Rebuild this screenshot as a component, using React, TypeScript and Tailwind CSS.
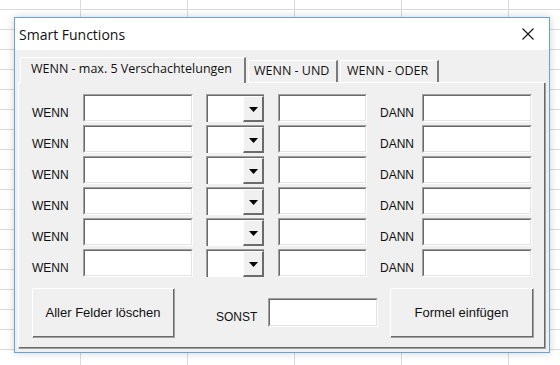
import { ReactNode } from 'react'

const rows = [0, 1, 2, 3, 4, 5]

const uiFont = "font-['Open_Sans',sans-serif]"
const ctlFont = "font-['Liberation_Sans',Arial,sans-serif]"

function TextBox({ className = '' }: { className?: string }) {
  return (
    <div className={`border-t border-l border-[#a0a0a0] border-r border-b border-r-white border-b-white ${className}`}>
      <div className="h-full bg-white border-t border-l border-[#696969] border-r border-b border-r-[#e3e3e3] border-b-[#e3e3e3]" />
    </div>
  )
}

function ComboBox() {
  return (
    <div className="flex h-[28px] w-[58px] bg-white border-t border-l border-[#a0a0a0]">
      <div className="flex flex-1 border-t border-l border-[#696969]">
        <div className="flex-1" />
        <div className="flex w-[21px] items-center justify-center border-t border-l border-white border-r-2 border-b-2 border-r-[#6b6b6b] border-b-[#6b6b6b] bg-[#f0f0f0]">
          <svg width="9" height="5" viewBox="0 0 9 5" className="mt-[1px]">
            <path d="M0 0h9L4.5 5z" fill="#000" />
          </svg>
        </div>
      </div>
    </div>
  )
}

function RaisedButton({ children, width }: { children: ReactNode; width: string }) {
  return (
    <div className={`${width} h-[50px] border-t border-l border-white border-r border-b border-r-[#a0a0a0] border-b-[#a0a0a0]`}>
      <div className={`flex h-full items-center justify-center border-r border-b border-[#696969] text-[13px] text-[#111] ${ctlFont}`}>
        {children}
      </div>
    </div>
  )
}

function Label({ text, width }: { text: string; width: string }) {
  return <div className={`${width} pt-[12px] text-[12px] leading-[14px] text-[#111] ${ctlFont}`}>{text}</div>
}

export default function App() {
  return (
    <div className="relative h-[365px] w-[560px] overflow-hidden bg-white bg-[linear-gradient(to_right,#dadada_1px,transparent_1px),linear-gradient(to_bottom,#dadada_1px,transparent_1px)] bg-size-[107px_20px] bg-position-[80px_9px]">
      <div className="absolute left-[14px] top-[17px] flex h-[336px] w-[536px] flex-col border border-[#64a3dc] bg-[#f0f0f0] shadow-[0_0_8px_rgba(0,0,0,0.18)]">
        {/* title bar */}
        <div className="flex h-[32px] items-center justify-between bg-white pl-[4px] pr-[15px]">
          <span className={`text-[14px] text-[#111] ${uiFont}`}>Smart Functions</span>
          <svg width="12" height="12" viewBox="0 0 12 12">
            <path d="M0.5 0.5l11 11M11.5 0.5l-11 11" stroke="#111" strokeWidth="1.1" />
          </svg>
        </div>

        <div className="flex flex-1 flex-col pt-[7px] pl-[3px] pr-[3px] pb-[3px]">
          {/* tabs */}
          <div className={`flex h-[25px] items-start pl-[2px] text-[12.5px] text-[#111] ${uiFont}`}>
            <div className="relative z-10 flex h-[26px] w-[226px] items-start border-t border-l border-white border-r-2 border-r-[#7a7a7a] bg-[#f0f0f0] pl-[10px] pt-[2px]">
              WENN - max. 5 Verschachtelungen
            </div>
            <div className="ml-[2px] mt-[3px] flex h-[22px] w-[90px] items-start border-t border-l border-white border-r-2 border-r-[#7a7a7a] pl-[5px] pt-[1px]">
              WENN - UND
            </div>
            <div className="ml-[2px] mt-[3px] flex h-[22px] w-[99px] items-start border-t border-l border-white border-r-2 border-r-[#7a7a7a] pl-[6px] pt-[1px]">
              WENN - ODER
            </div>
          </div>

          {/* page */}
          <div className="flex-1 border-t border-l border-white border-r border-b border-r-[#a0a0a0] border-b-[#a0a0a0]">
            <div className="h-full border-r border-b border-[#696969] pl-[13px] pt-[11px]">
              <div className="flex flex-col gap-[3px]">
                {rows.map((r) => (
                  <div key={r} className="flex h-[28px] items-start">
                    <Label text="WENN" width="w-[51px]" />
                    <TextBox className="h-[28px] w-[110px]" />
                    <div className="ml-[13px]">
                      <ComboBox />
                    </div>
                    <TextBox className="ml-[14px] h-[28px] w-[89px]" />
                    <div className="ml-[13px] flex">
                      <Label text="DANN" width="w-[42px]" />
                      <TextBox className="h-[28px] w-[110px]" />
                    </div>
                  </div>
                ))}
              </div>

              <div className="mt-[11px] flex items-start">
                <RaisedButton width="w-[143px]">Aller Felder löschen</RaisedButton>
                <div className="ml-[41px] mt-[10px] flex items-start">
                  <Label text="SONST" width="w-[52px]" />
                  <TextBox className="h-[29px] w-[110px]" />
                </div>
                <div className="ml-[12px]">
                  <RaisedButton width="w-[144px]">Formel einfügen</RaisedButton>
                </div>
              </div>
            </div>
          </div>
        </div>
      </div>
    </div>
  )
}
